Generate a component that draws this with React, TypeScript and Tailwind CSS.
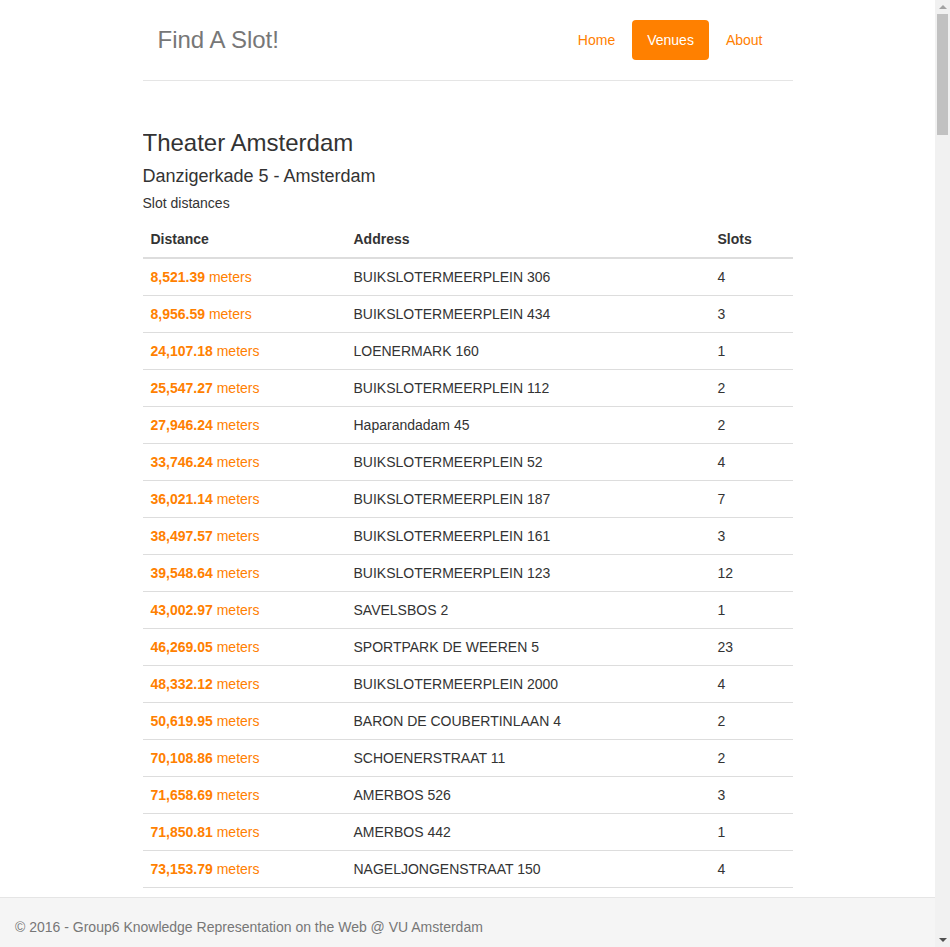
import React from "react";

type Slot = { distance: string; address: string; slots: number };

const rows: Slot[] = [
  { distance: "8,521.39", address: "BUIKSLOTERMEERPLEIN 306", slots: 4 },
  { distance: "8,956.59", address: "BUIKSLOTERMEERPLEIN 434", slots: 3 },
  { distance: "24,107.18", address: "LOENERMARK 160", slots: 1 },
  { distance: "25,547.27", address: "BUIKSLOTERMEERPLEIN 112", slots: 2 },
  { distance: "27,946.24", address: "Haparandadam 45", slots: 2 },
  { distance: "33,746.24", address: "BUIKSLOTERMEERPLEIN 52", slots: 4 },
  { distance: "36,021.14", address: "BUIKSLOTERMEERPLEIN 187", slots: 7 },
  { distance: "38,497.57", address: "BUIKSLOTERMEERPLEIN 161", slots: 3 },
  { distance: "39,548.64", address: "BUIKSLOTERMEERPLEIN 123", slots: 12 },
  { distance: "43,002.97", address: "SAVELSBOS 2", slots: 1 },
  { distance: "46,269.05", address: "SPORTPARK DE WEEREN 5", slots: 23 },
  { distance: "48,332.12", address: "BUIKSLOTERMEERPLEIN 2000", slots: 4 },
  { distance: "50,619.95", address: "BARON DE COUBERTINLAAN 4", slots: 2 },
  { distance: "70,108.86", address: "SCHOENERSTRAAT 11", slots: 2 },
  { distance: "71,658.69", address: "AMERBOS 526", slots: 3 },
  { distance: "71,850.81", address: "AMERBOS 442", slots: 1 },
  { distance: "73,153.79", address: "NAGELJONGENSTRAAT 150", slots: 4 },
];

function Scrollbar() {
  return (
    <div className="flex h-full w-[15px] shrink-0 flex-col items-center bg-[#f1f1f1]">
      <div className="flex h-[14px] items-center justify-center">
        <div className="h-0 w-0 border-x-[4px] border-b-[4px] border-x-transparent border-b-[#a3a3a3]" />
      </div>
      <div className="h-[121px] w-[11px] bg-[#c1c1c1]" />
      <div className="flex-1" />
      <div className="flex h-[14px] items-center justify-center">
        <div className="h-0 w-0 border-x-[4px] border-t-[4px] border-x-transparent border-t-[#505050]" />
      </div>
    </div>
  );
}

export default function App() {
  return (
    <div className="flex h-screen bg-white text-[14px] leading-5 text-[#333] [font-family:'Liberation_Sans',Arial,sans-serif]">
      <div className="flex min-w-0 flex-1 flex-col">
        <div className="mx-auto w-[650px] flex-1 overflow-hidden">
          <header className="flex items-center justify-between border-b border-[#e5e5e5] pt-5 pb-5">
            <h3 className="pl-[15px] text-[24px] leading-10 text-[#777]">Find A Slot!</h3>
            <nav className="flex gap-[2px] pr-[15px]">
              <a className="rounded px-[15px] leading-10 text-[#ff8000]">Home</a>
              <a className="rounded bg-[#ff8000] px-[15px] leading-10 text-white">Venues</a>
              <a className="rounded px-[15px] leading-10 text-[#ff8000]">About</a>
            </nav>
          </header>

          <h3 className="mt-[49px] text-[24px] leading-[26px]">Theater Amsterdam</h3>
          <h4 className="mt-[10px] text-[18px] leading-[20px]">Danzigerkade 5 - Amsterdam</h4>
          <p className="mt-[7px]">Slot distances</p>

          <table className="mt-2 w-full table-fixed border-collapse">
            <thead>
              <tr className="border-b-2 border-[#ddd] text-left">
                <th className="w-[203px] p-2 font-bold">Distance</th>
                <th className="w-[364px] p-2 font-bold">Address</th>
                <th className="p-2 font-bold">Slots</th>
              </tr>
            </thead>
            <tbody>
              {rows.map((r, i) => (
                <tr key={i} className="border-b border-[#ddd]">
                  <td className="p-2 text-[#ff8000]">
                    <b>{r.distance}</b> meters
                  </td>
                  <td className="p-2">{r.address}</td>
                  <td className="p-2">{r.slots}</td>
                </tr>
              ))}
            </tbody>
          </table>
        </div>

        <footer className="h-[50px] shrink-0 border-t border-[#e5e5e5] bg-[#f5f5f5] px-[15px] pt-[19px] text-[#777]">
          © 2016 - Group6 Knowledge Representation on the Web @ VU Amsterdam
        </footer>
      </div>
      <Scrollbar />
    </div>
  );
}
